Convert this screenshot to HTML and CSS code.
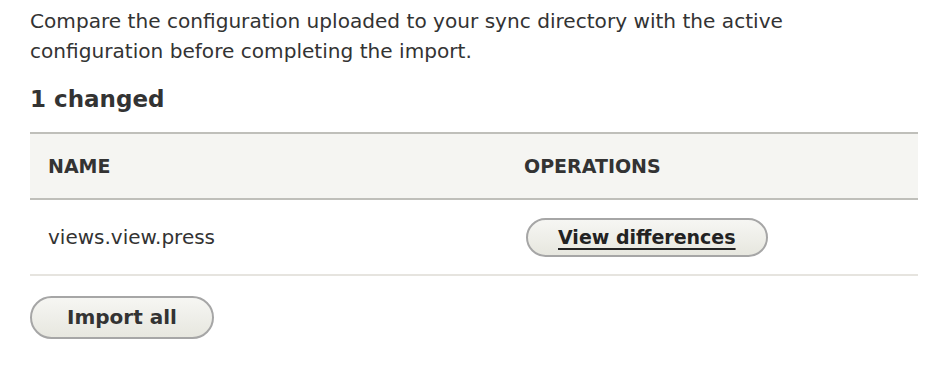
FILE: index.html
```html
<!DOCTYPE html>
<html lang="en">
<head>
    <meta charset="UTF-8">
    <meta name="viewport" content="width=device-width, initial-scale=1.0">
    <title>Synchronize configuration</title>
    <link rel="stylesheet" href="styles.css">
</head>
<body>
    <div class="page">
        <p class="intro">Compare the configuration uploaded to your sync directory with the active configuration before completing the import.</p>

        <h3 class="group-title">1 changed</h3>

        <table class="config-table">
            <thead>
                <tr>
                    <th class="col-name">Name</th>
                    <th>Operations</th>
                </tr>
            </thead>
            <tbody>
                <tr>
                    <td>views.view.press</td>
                    <td><a href="#" class="button button--small">View differences</a></td>
                </tr>
            </tbody>
        </table>

        <div class="form-actions">
            <button type="submit" class="button">Import all</button>
        </div>
    </div>
</body>
</html>
```

FILE: styles.css
```css
body {
    font-family: "DejaVu Sans", Verdana, sans-serif;
    background-color: #ffffff;
    margin: 0;
    padding: 0;
    color: #333;
}
.page {
    padding: 0 20px 0 30px;
}
.intro {
    font-size: 20.1px;
    line-height: 30px;
    margin: 6px 0 0;
    max-width: 850px;
}
.group-title {
    font-size: 23px;
    font-weight: bold;
    margin: 17px 0 0;
    line-height: 32px;
}
.config-table {
    width: 100%;
    border-collapse: collapse;
    margin-top: 17px;
}
.config-table th {
    background-color: #f5f5f2;
    border-top: 2px solid #bfbfba;
    border-bottom: 2px solid #bfbfba;
    text-align: left;
    text-transform: uppercase;
    font-size: 19px;
    font-weight: bold;
    height: 64px;
    padding: 0 18px;
}
.config-table th.col-name {
    width: 440px;
}
.config-table td {
    border-bottom: 2px solid #e6e4df;
    font-size: 20px;
    height: 74px;
    padding: 0 18px;
}
.button {
    display: inline-block;
    font-family: inherit;
    font-weight: bold;
    color: #333;
    background: linear-gradient(to bottom, #f6f6f3, #e7e7df);
    border: 2px solid #a6a6a6;
    border-radius: 22px;
    cursor: pointer;
}
.button--small {
    font-size: 19px;
    line-height: 23px;
    color: #222;
    padding: 6px 30px;
    margin-left: 2px;
    text-decoration: underline;
    text-decoration-thickness: 2px;
    text-underline-offset: 4px;
}
.form-actions {
    margin-top: 20px;
}
.form-actions .button {
    font-size: 20px;
    line-height: 24px;
    padding: 7px 35px 8px;
}
```
